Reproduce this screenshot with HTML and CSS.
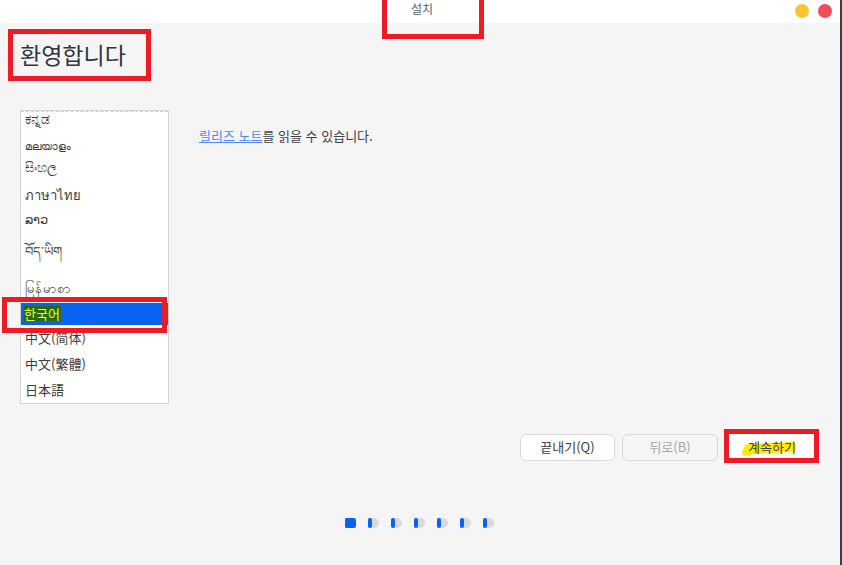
FILE: index.html
```html
<!DOCTYPE html>
<html lang="ko">
<head>
    <meta charset="UTF-8">
    <meta name="viewport" content="width=device-width, initial-scale=1.0">
    <title>설치</title>
    <link rel="stylesheet" href="styles.css">
</head>
<body>
    <div class="window">
        <div class="titlebar">
            <span class="title">설치</span>
            <div class="controls">
                <span class="dot dot-min"></span>
                <span class="dot dot-close"></span>
            </div>
            <div class="mark mark-title"></div>
        </div>
        <div class="content">
            <div class="heading-row">
                <h1>환영합니다</h1>
                <div class="mark mark-heading"></div>
            </div>
            <div class="body-row">
                <div class="lang-list">
                    <div class="lang lang-kn">ಕನ್ನಡ</div>
                    <div class="lang lang-ml">മലയാളം</div>
                    <div class="lang lang-si">සිංහල</div>
                    <div class="lang lang-th">ภาษาไทย</div>
                    <div class="lang lang-lo">ລາວ</div>
                    <div class="lang lang-bo">བོད་ཡིག</div>
                    <div class="lang lang-my">မြန်မာစာ</div>
                    <div class="lang selected"><span class="sel-text">한국어</span></div>
                    <div class="lang lang-cjk">中文(简体)</div>
                    <div class="lang lang-cjk">中文(繁體)</div>
                    <div class="lang lang-cjk">日本語</div>
                </div>
                <p class="notes"><a href="#">릴리즈 노트</a>를 읽을 수 있습니다.</p>
                <div class="mark mark-lang"></div>
            </div>
            <div class="button-row">
                <button class="btn btn-quit">끝내기(Q)</button>
                <button class="btn disabled">뒤로(B)</button>
                <div class="next-wrap">
                    <svg class="scribble" width="54" height="16" viewBox="0 0 54 16">
                        <path d="M0 13 Q1 6 5 3 L50 1 Q54 1 54 5 L53 11 L12 13 L2 15 Z" fill="#ffea00"/>
                    </svg>
                    <span class="next-label">계속하기</span>
                    <div class="mark mark-next"></div>
                </div>
            </div>
            <div class="steps">
                <span class="step current"></span>
                <span class="step"></span>
                <span class="step"></span>
                <span class="step"></span>
                <span class="step"></span>
                <span class="step"></span>
                <span class="step"></span>
            </div>
        </div>
    </div>
</body>
</html>
```
FILE: styles.css
```css
body {
    margin: 0;
    height: 565px;
    overflow: hidden;
    background-color: #ffffff;
    font-family: "Noto Sans CJK KR", "Noto Sans", sans-serif;
    color: #3d3d3d;
}
.window {
    width: 840px;
    height: 565px;
    display: flex;
    flex-direction: column;
    border-right: 2px solid #3b3d4f;
}
.titlebar {
    position: relative;
    height: 23px;
    flex-shrink: 0;
    background-color: #ffffff;
}
.title {
    position: absolute;
    left: 411px;
    top: 0;
    font-size: 12px;
    line-height: 18px;
    color: #5a5f66;
}
.controls {
    position: absolute;
    right: 8px;
    top: 4px;
    display: flex;
    gap: 9px;
}
.dot {
    width: 14px;
    height: 14px;
    border-radius: 50%;
}
.dot-min {
    background-color: #fdc234;
}
.dot-close {
    background-color: #f44d58;
}
.content {
    flex: 1;
    display: flex;
    flex-direction: column;
    background-color: #f5f5f5;
}
.heading-row {
    position: relative;
    height: 87px;
    padding-left: 20px;
}
h1 {
    margin: 0;
    padding-top: 13px;
    font-size: 23px;
    line-height: 36px;
    font-weight: 400;
    color: #2e3440;
}
.body-row {
    position: relative;
    display: flex;
    padding-left: 20px;
}
.lang-list {
    position: relative;
    width: 147px;
    height: 292px;
    overflow: hidden;
    background-color: #ffffff;
    border: 1px solid #d5d5d5;
}
/* dashed line where the list is scrolled */
.lang-list::before {
    content: "";
    position: absolute;
    left: 0;
    right: 0;
    top: 0;
    border-top: 1px dashed #cfcfcf;
}
.lang {
    display: flex;
    align-items: center;
    height: 20px;
    padding-left: 4px;
    font-size: 13px;
    line-height: 20px;
    color: #3d3d3d;
}
/* the scripts have uneven line heights in the list */
.lang-kn { margin-top: -3px; font-size: 14px; }
.lang-ml { margin-top: 7px; font-size: 11px; }
.lang-si { margin-top: 2px; }
.lang-th { margin-top: 8px; }
.lang-lo { margin-top: 4px; }
.lang-bo { margin-top: 12px; }
.lang-my { margin-top: 17px; }
.lang-cjk { height: 24px; margin-top: 2px; }
.selected {
    box-sizing: border-box;
    height: 22px;
    margin-top: 5px;
    padding-left: 3px;
    padding-bottom: 2px;
    background-color: #0a63f0;
}
.selected + .lang-cjk {
    margin-top: 1px;
}
.sel-text {
    background-color: #2a6a00;
    color: #f2ff3c;
    line-height: 15px;
    padding-right: 1px;
}
.notes {
    margin: 17px 0 0 30px;
    font-size: 13px;
    line-height: 18px;
    color: #3a3f4a;
}
.notes a {
    color: #4a8cf5;
}
.button-row {
    display: flex;
    align-items: center;
    margin-top: 30px;
    padding-left: 520px;
    gap: 7px;
}
.btn {
    width: 96px;
    height: 27px;
    padding: 0 0 3px;
    background-color: #ffffff;
    border: 1px solid #d9d9d9;
    border-radius: 6px;
    font-family: inherit;
    font-size: 13px;
    color: #3a3f4a;
}
.btn-quit {
    width: 95px;
}
.btn.disabled {
    background-color: #f5f5f5;
    color: #a8a8a8;
}
.next-wrap {
    position: relative;
    width: 90px;
    height: 27px;
    margin-left: 2px;
    display: flex;
    align-items: center;
    justify-content: center;
    background-color: #ffffff;
    font-size: 13px;
    color: #3a3f4a;
}
.scribble {
    position: absolute;
    left: 15px;
    top: 7px;
}
.next-label {
    position: relative;
    margin-bottom: 2px;
}
.steps {
    display: flex;
    gap: 12px;
    margin-top: 57px;
    padding-left: 345px;
}
.step {
    position: relative;
    width: 11px;
    height: 10px;
    border-radius: 0 5px 5px 0;
    background-color: #d9d9d9;
}
.step::before {
    content: "";
    position: absolute;
    left: 0;
    top: 0;
    width: 4px;
    height: 10px;
    border-radius: 2px;
    background-color: #0a63f0;
}
.step.current {
    border-radius: 2px;
    background-color: #0a63f0;
}
/* red annotation boxes drawn on top of the screenshot */
.mark {
    position: absolute;
    border: 5px solid #ed1c24;
    box-sizing: border-box;
}
.mark-title {
    left: 382px;
    top: -6px;
    width: 102px;
    height: 45px;
}
.mark-heading {
    left: 8px;
    top: 6px;
    width: 143px;
    height: 52px;
}
.mark-lang {
    left: 2px;
    top: 187px;
    width: 165px;
    height: 36px;
}
.mark-next {
    left: -3px;
    top: -5px;
    width: 95px;
    height: 34px;
}
```
